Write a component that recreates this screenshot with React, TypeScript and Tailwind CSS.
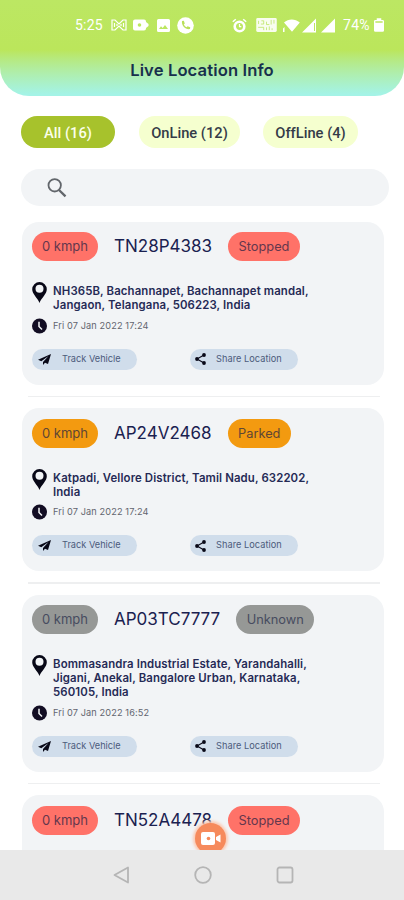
import React from 'react';

interface Vehicle {
  plate: string;
  status: string;
  address?: string[];
  time?: string;
}

const vehicles: Vehicle[] = [
  {
    plate: 'TN28P4383',
    status: 'Stopped',
    address: ['NH365B, Bachannapet, Bachannapet mandal,', 'Jangaon, Telangana, 506223, India'],
    time: 'Fri 07 Jan 2022 17:24',
  },
  {
    plate: 'AP24V2468',
    status: 'Parked',
    address: ['Katpadi, Vellore District, Tamil Nadu, 632202,', 'India'],
    time: 'Fri 07 Jan 2022 17:24',
  },
  {
    plate: 'AP03TC7777',
    status: 'Unknown',
    address: ['Bommasandra Industrial Estate, Yarandahalli,', 'Jigani, Anekal, Bangalore Urban, Karnataka,', '560105, India'],
    time: 'Fri 07 Jan 2022 16:52',
  },
  { plate: 'TN52A4478', status: 'Stopped' },
];

const statusColors: Record<string, string> = {
  Stopped: 'bg-[#ff7268] text-[#64374d]',
  Parked: 'bg-[#f39a10] text-[#604634]',
  Unknown: 'bg-[#969896] text-[#474c60]',
};

const StatusBar = () => (
  <div className="flex h-[50px] items-center pl-[75px] pr-[20px] text-white font-['Roboto'] text-[14px]">
    <span className="w-[28px] tracking-[0.2px]">5:25</span>
    <svg className="ml-[8px]" width="16" height="12" viewBox="0 0 16 12" fill="none" stroke="currentColor" strokeWidth="1.2">
      <path d="M1 1h3l4 4 4-4h3v10h-3L8 7l-4 4H1z" />
      <path d="M3.5 4v4M12.5 4v4M6 5v2M10 5v2" />
    </svg>
    <svg className="ml-[6px]" width="17" height="12" viewBox="0 0 17 12" fill="currentColor">
      <path fillRule="evenodd" d="M2 .5h9a2 2 0 0 1 2 2v.5l2.500 2v2L13 9v.5a2 2 0 0 1-2 2H2a2 2 0 0 1-2-2v-7a2 2 0 0 1 2-2zM6.500 4.200a1.800 1.800 0 1 0 0 3.600 1.800 1.800 0 0 0 0-3.600z" />
    </svg>
    <svg className="ml-[7px]" width="13" height="13" viewBox="0 0 13 13" fill="currentColor">
      <path fillRule="evenodd" d="M1.500 0h10A1.500 1.500 0 0 1 13 1.500v10a1.500 1.500 0 0 1-1.500 1.500h-10A1.500 1.500 0 0 1 0 11.500v-10A1.500 1.500 0 0 1 1.500 0zM2 10h9L8 6 5.700 9 4 7.200z" />
    </svg>
    <svg className="ml-[7px]" width="17" height="17" viewBox="0 0 17 17">
      <circle cx="8.500" cy="8.500" r="8.300" fill="currentColor" />
      <path fill="#b9df58" d="M5 4l1.800-.2 1 2.600-1 1a6 6 0 0 0 2.800 2.800l1-1 2.600 1-.2 1.900c-4.300.9-8.800-3.600-8-8.100z" />
    </svg>
    <div className="grow" />
    <svg className="mr-[-1px]" width="15" height="15" viewBox="0 0 15 15" fill="none" stroke="currentColor">
      <path strokeWidth="1.500" d="M.8 3.800l3-2.600M14.200 3.800l-3-2.600" />
      <circle cx="7.500" cy="8.500" r="4.800" strokeWidth="2.600" />
      <path strokeWidth="1.200" d="M7.500 6v2.700h1.800" />
    </svg>
    <svg className="ml-[10px]" width="21" height="14" viewBox="0 0 22 15">
      <rect width="22" height="15" rx="1.500" fill="currentColor" opacity=".9" />
      <path d="M2.500 3v3.500M5.500 3h2.500v3.500h-3M2 10h6v3M11 4v3h3M16 2v5M19 2v4M11 10v3M14 9v4M17 11v2" fill="none" stroke="#b9e45c" strokeWidth=".8" />
    </svg>
    <svg className="ml-[6px]" width="17" height="15" viewBox="0 0 17 15" fill="currentColor">
      <path d="M1 4.500C5.500.5 12 .5 16.800 4.500L9 13.800zM0 10.500l1.500-1.500v5H0z" />
    </svg>
    <svg className="ml-[2px]" width="15" height="15" viewBox="0 0 15 15" fill="currentColor">
      <path fillRule="evenodd" d="M0 14.500L14 .5v14zM12 5v8h1V5z" />
    </svg>
    <svg className="ml-[4px]" width="15" height="15" viewBox="0 0 15 15" fill="currentColor">
      <path d="M0 14.500L14 .5v14z" />
    </svg>
    <span className="ml-[7px] w-[29px] tracking-[0.3px]">74%</span>
    <svg className="ml-[2px]" width="10" height="14" viewBox="0 0 11 15" fill="currentColor">
      <path fillRule="evenodd" d="M3 0h5v2h1.500A1.500 1.500 0 0 1 11 3.500v10A1.500 1.500 0 0 1 9.500 15h-8A1.500 1.500 0 0 1 0 13.500v-10A1.500 1.500 0 0 1 1.500 2H3zM1.500 3.500V5h8V3.500z" />
    </svg>
  </div>
);

const VehicleDetails: React.FC<{ address: string[]; time?: string }> = ({ address, time }) => (
  <>
    <div className="mt-[20px] flex">
      <svg className="mt-px shrink-0" width="15" height="21" viewBox="0 0 15 21" fill="#080817">
        <path fillRule="evenodd" d="M7.500 0A7.300 7.300 0 0 0 .2 7.300C.2 12 5.500 16 7.500 21c2-5 7.300-9 7.300-13.700A7.300 7.300 0 0 0 7.500 0zm0 2.800a4 4 0 1 1 0 8 4 4 0 0 1 0-8z" />
      </svg>
      <div className="ml-[6px] pt-[3px] text-[11.400px] font-semibold leading-[14px] tracking-[0.120px] text-[#252a55]">
        {address.map((line) => (
          <p key={line} className="whitespace-nowrap">{line}</p>
        ))}
      </div>
    </div>

    <div className="mt-[5.500px] flex h-[16px] items-center">
      <svg width="15" height="16" viewBox="0 0 15 16">
        <circle cx="7.500" cy="8" r="7.500" fill="#120d23" />
        <path d="M7 3.800v4.700l3 3" fill="none" stroke="#f2f4f6" strokeWidth="1.500" />
      </svg>
      <span className="ml-[6px] text-[9.200px] tracking-[0.110px] text-[#62656f]">{time}</span>
    </div>

    <div className="mt-[15px] flex text-[9.200px] text-[#4c5b7b]">
      <button className="flex h-[21px] w-[105px] items-center rounded-full bg-[#d0ddeb] pl-[6px]">
        <svg width="13" height="11" viewBox="0 0 13 11" fill="#080817">
          <path d="M13 0L0 5.700l3.300 1.500L10.500 2 5 8v3l2-2.200 3 1.200z" />
        </svg>
        <span className="ml-[11px] pb-px">Track Vehicle</span>
      </button>
      <button className="ml-[53px] flex h-[21px] w-[108px] items-center rounded-full bg-[#d0ddeb] pl-[5px]">
        <svg width="11" height="12" viewBox="0 0 11 12" fill="#080817">
          <path d="M9 2L2 6l7 4" fill="none" stroke="#080817" strokeWidth="1.100" />
          <circle cx="9" cy="2" r="1.900" />
          <circle cx="2" cy="6" r="1.900" />
          <circle cx="9" cy="10" r="1.900" />
        </svg>
        <span className="ml-[10px] pb-px tracking-[0.050px]">Share Location</span>
      </button>
    </div>
  </>
);

const VehicleCard: React.FC<{ vehicle: Vehicle }> = ({ vehicle }) => {
  const color = statusColors[vehicle.status];

  return (
    <div className="min-h-[163px] rounded-[17px] bg-[#f2f4f6] pt-[10.500px] pb-[15px] pl-[10px]">
      <div className="flex h-[29px] items-center">
        <span className={`flex h-[29px] w-[66px] items-center justify-center rounded-full pt-px text-[13px] ${color}`}>0 kmph</span>
        <span className="ml-[16px] text-[17px] leading-none text-[#1a2150]">{vehicle.plate}</span>
        <span className={`ml-[16px] flex h-[29px] items-center rounded-full px-[10.500px] pt-px text-[12.800px] ${color}`}>{vehicle.status}</span>
      </div>
      {vehicle.address && <VehicleDetails address={vehicle.address} time={vehicle.time} />}
    </div>
  );
};

export default function App() {
  return (
    <div className="relative flex h-[900px] w-[404px] flex-col overflow-hidden bg-white font-['Inter',sans-serif]">
      <header className="h-[96px] shrink-0 rounded-b-[29px] bg-linear-to-b from-[#bce763] from-0% via-[#bbe65b] via-52% to-[#a4f3e6] to-98%">
        <StatusBar />
        <h1 className="mt-[8px] text-center text-[16.600px] font-semibold leading-[24px] tracking-[0.120px] text-[#17304d]">Live Location Info</h1>
      </header>

      <nav className="mt-[20px] flex h-[32px] shrink-0 pl-[21px] font-['Roboto'] text-[14.700px] font-medium text-[#343b48]">
        <button className="w-[94px] rounded-full bg-[#a7c22c] pt-[2px] text-[#fbffe9]">All (16)</button>
        <button className="ml-[24px] w-[101px] rounded-full bg-[#f5ffcf] pt-[2px]">OnLine (12)</button>
        <button className="ml-[23px] w-[95px] rounded-full bg-[#f5ffcf] pt-[2px]">OffLine (4)</button>
      </nav>

      <div className="mt-[21px] mr-[15px] ml-[21px] flex h-[37px] shrink-0 items-center rounded-full bg-[#f2f4f6] pl-[26px]">
        <svg width="20" height="20" viewBox="0 0 20 20" fill="none" stroke="#62666b" strokeWidth="1.800">
          <circle cx="7.700" cy="7.300" r="6.200" />
          <path d="M12 12l6.500 6.300" strokeWidth="2.400" />
        </svg>
      </div>

      <main className="min-h-0 grow overflow-hidden pt-[15.500px] pr-[20px] pl-[22px]">
        {vehicles.map((vehicle, index) => (
          <React.Fragment key={vehicle.plate}>
            {index > 0 && <div className="mt-[11px] mr-[4px] mb-[11px] ml-[6px] h-[1.500px] bg-[#eeeff0]" />}
            <VehicleCard vehicle={vehicle} />
          </React.Fragment>
        ))}
      </main>

      {/* Screen recorder bubble, tucked behind the system bar */}
      <div className="absolute top-[823px] left-[195px] flex h-[31px] w-[31px] items-center justify-center rounded-full bg-[#f68a5c] shadow-[0_0_3px_2px_#fbc9b2]">
        <svg width="20" height="13" viewBox="0 0 20 13" fill="#fff">
          <path d="M2 0h10a2 2 0 0 1 2 2v9a2 2 0 0 1-2 2H2a2 2 0 0 1-2-2V2a2 2 0 0 1 2-2zM15 5l4.500-2.500v8L15 8z" />
          <circle cx="7.500" cy="6.500" r="1.800" fill="#f68a5c" />
        </svg>
      </div>

      <footer className="z-10 flex h-[50px] shrink-0 items-center bg-[#e9e9e9] pl-[113px] text-[#b5b5b5]">
        <svg width="17" height="18" viewBox="0 0 17 18" fill="none" stroke="currentColor" strokeWidth="1.800" strokeLinejoin="round">
          <path d="M15 1.500v15L1.500 9z" />
        </svg>
        <svg className="ml-[64px]" width="18" height="18" viewBox="0 0 18 18" fill="none" stroke="currentColor" strokeWidth="1.800">
          <circle cx="9" cy="9" r="7.800" />
        </svg>
        <svg className="ml-[64px]" width="18" height="18" viewBox="0 0 18 18" fill="none" stroke="currentColor" strokeWidth="1.800">
          <rect x="1.500" y="1.500" width="15" height="15" rx="2" />
        </svg>
      </footer>
    </div>
  );
}
